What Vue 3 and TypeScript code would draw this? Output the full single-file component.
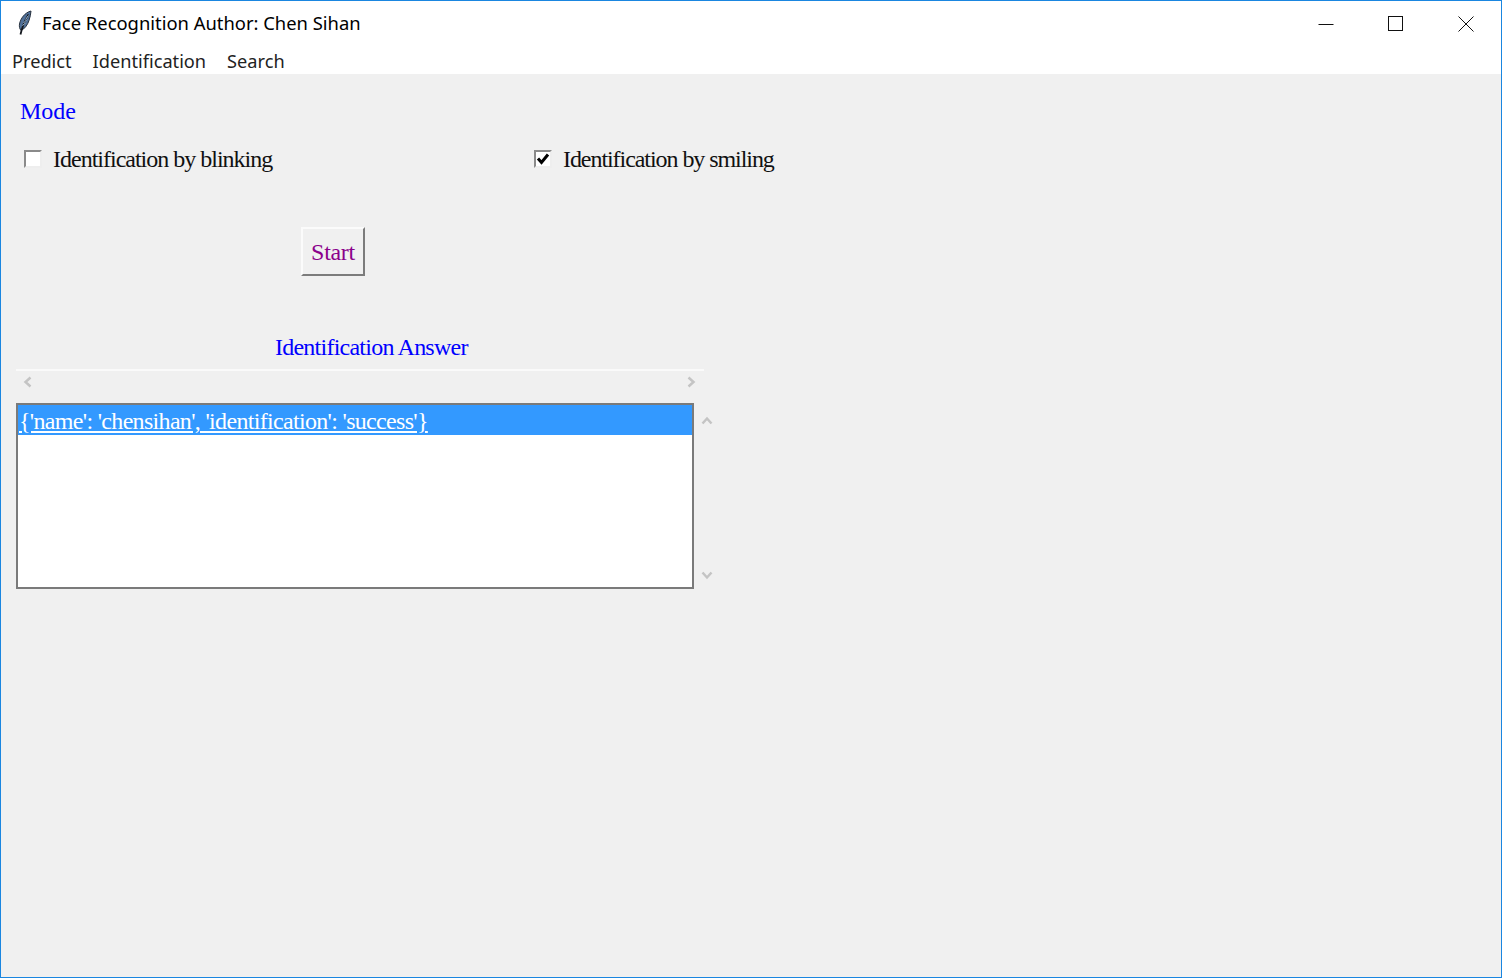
<script setup lang="ts">
const menus = ['Predict', 'Identification', 'Search'];
const answer = "{'name': 'chensihan', 'identification': 'success'}";
</script>

<template>
  <div class="window">
    <header class="titlebar">
      <svg class="feather" width="18" height="26" viewBox="0 0 18 26">
        <path d="M15 1C9 2.500 4.500 8.500 3.500 14c-.4 2.500 0 4.500 1.500 6.500 3.500-1.500 6.500-5.500 8-10 1-3 1.800-6.500 2-9.500z" fill="#4f7099" stroke="#28323f" stroke-width="1" />
        <path d="M12.500 4.500C9.500 9.500 6.500 15.500 4.500 24.500" fill="none" stroke="#14181e" stroke-width="1.800" />
        <path d="M12.500 5.500l-3 4M11 9.500l-3.500 3.500M9.500 13l-3 2.500" fill="none" stroke="#a9c3dc" stroke-width="1" />
      </svg>
      <span class="title">Face Recognition Author: Chen Sihan</span>
      <div class="controls">
        <span class="control">
          <svg width="16" height="16" viewBox="0 0 16 16"><path d="M0.500 8.500H15.500" stroke="#111" stroke-width="1" /></svg>
        </span>
        <span class="control">
          <svg width="16" height="16" viewBox="0 0 16 16"><rect x="0.500" y="0.500" width="14" height="14" fill="none" stroke="#111" stroke-width="1" /></svg>
        </span>
        <span class="control">
          <svg width="16" height="16" viewBox="0 0 16 16"><path d="M0.500 0.500L15.500 15.500M15.500 0.500L0.500 15.500" stroke="#111" stroke-width="1" /></svg>
        </span>
      </div>
    </header>
    <nav class="menubar">
      <span v-for="m in menus" :key="m" class="menu-item">{{ m }}</span>
    </nav>
    <main class="content">
      <div class="mode-label">Mode</div>
      <div class="checks">
        <label class="check">
          <span class="box"></span>
          <span class="check-text blink">Identification by blinking</span>
        </label>
        <label class="check">
          <span class="box">
            <svg width="14" height="14" viewBox="0 0 14 14"><path d="M2 6.500L5.500 10.500L12 2.500" fill="none" stroke="#000" stroke-width="3" /></svg>
          </span>
          <span class="check-text smile">Identification by smiling</span>
        </label>
      </div>
      <div class="start-row">
        <button class="start" type="button">Start</button>
      </div>
      <div class="answer-label">Identification Answer</div>
      <div class="hscroll">
        <svg width="12" height="12" viewBox="0 0 12 12"><path d="M8.500 1.500L3.500 6L8.500 10.500" fill="none" stroke="#c4c4c4" stroke-width="2.500" /></svg>
        <svg width="12" height="12" viewBox="0 0 12 12"><path d="M3.500 1.500L8.500 6L3.500 10.500" fill="none" stroke="#c4c4c4" stroke-width="2.500" /></svg>
      </div>
      <div class="list-row">
        <div class="listbox">
          <div class="list-item">{{ answer }}</div>
        </div>
        <div class="vscroll">
          <svg width="12" height="12" viewBox="0 0 12 12"><path d="M1.500 8.500L6 3.500L10.500 8.500" fill="none" stroke="#c4c4c4" stroke-width="2.500" /></svg>
          <svg width="12" height="12" viewBox="0 0 12 12"><path d="M1.500 3.500L6 8.500L10.500 3.500" fill="none" stroke="#c4c4c4" stroke-width="2.500" /></svg>
        </div>
      </div>
    </main>
  </div>
</template>

<style scoped>
.window {
  box-sizing: border-box;
  width: 1502px;
  height: 978px;
  border: 1px solid #1a86e0;
  display: flex;
  flex-direction: column;
  background: #fff;
  overflow: hidden;
}

.titlebar {
  height: 44px;
  flex-shrink: 0;
  display: flex;
  align-items: center;
  padding-left: 15px;
  box-sizing: border-box;
}

.feather {
  flex-shrink: 0;
  margin-right: 8px;
}

.title {
  font-family: "Noto Sans", sans-serif;
  font-size: 18.4px;
  color: #000;
  margin-bottom: 2px;
}

.controls {
  margin-left: auto;
  display: flex;
}

.control {
  box-sizing: border-box;
  width: 70px;
  height: 44px;
  padding-top: 2px;
  display: flex;
  align-items: center;
  justify-content: center;
}

.menubar {
  height: 29px;
  flex-shrink: 0;
  display: flex;
  align-items: center;
  gap: 21px;
  padding: 2px 0 0 11px;
  box-sizing: border-box;
  font-family: "Noto Sans", sans-serif;
  font-size: 18.2px;
  color: #222;
}

.content {
  flex: 1;
  background: #f0f0f0;
  font-family: "Liberation Serif", serif;
  font-size: 24px;
  color: #111;
  padding: 23px 0 0 15px;
}

.mode-label {
  color: #0000ff;
  line-height: 28px;
  padding-left: 4px;
}

.checks {
  display: flex;
  margin-top: 20px;
  padding-left: 8px;
}

.check {
  width: 510px;
  display: flex;
  align-items: center;
  gap: 11px;
  line-height: 28px;
}

.check-text {
  white-space: nowrap;
}

.blink {
  letter-spacing: -1px;
}

.smile {
  letter-spacing: -1.06px;
}

.box {
  box-sizing: border-box;
  width: 18px;
  height: 18px;
  background: #fff;
  border: 2px solid;
  border-color: #8a8a8a #eee #eee #8a8a8a;
  display: flex;
  align-items: center;
  justify-content: center;
}

.start-row {
  margin-top: 54px;
  padding-left: 285px;
}

.start {
  box-sizing: border-box;
  width: 64px;
  height: 49px;
  background: #f0f0f0;
  border: 2px solid;
  border-color: #fbfbfb #7c7c7c #7c7c7c #fbfbfb;
  font-family: "Liberation Serif", serif;
  font-size: 24px;
  letter-spacing: -0.3px;
  color: #8b008b;
  padding: 2px 0 0;
}

.answer-label {
  color: #0000ff;
  line-height: 28px;
  letter-spacing: -0.76px;
  margin-top: 57px;
  padding-left: 259px;
}

.hscroll {
  width: 688px;
  height: 22px;
  margin-top: 8px;
  border-top: 2px solid #fafafa;
  display: flex;
  align-items: center;
  justify-content: space-between;
}

.hscroll svg:first-child {
  margin-left: 6px;
}

.hscroll svg:last-child {
  margin-right: 7px;
}

.list-row {
  display: flex;
  margin-top: 10px;
}

.listbox {
  box-sizing: border-box;
  width: 678px;
  height: 186px;
  background: #fff;
  border: 2px solid #7a7a7a;
}

.list-item {
  height: 30px;
  line-height: 33px;
  padding-left: 1px;
  background: #3399ff;
  color: #fff;
  text-decoration: underline;
  letter-spacing: -0.68px;
  white-space: nowrap;
  overflow: hidden;
}

.vscroll {
  display: flex;
  flex-direction: column;
  justify-content: space-between;
  padding: 12px 0 8px 7px;
}
</style>
